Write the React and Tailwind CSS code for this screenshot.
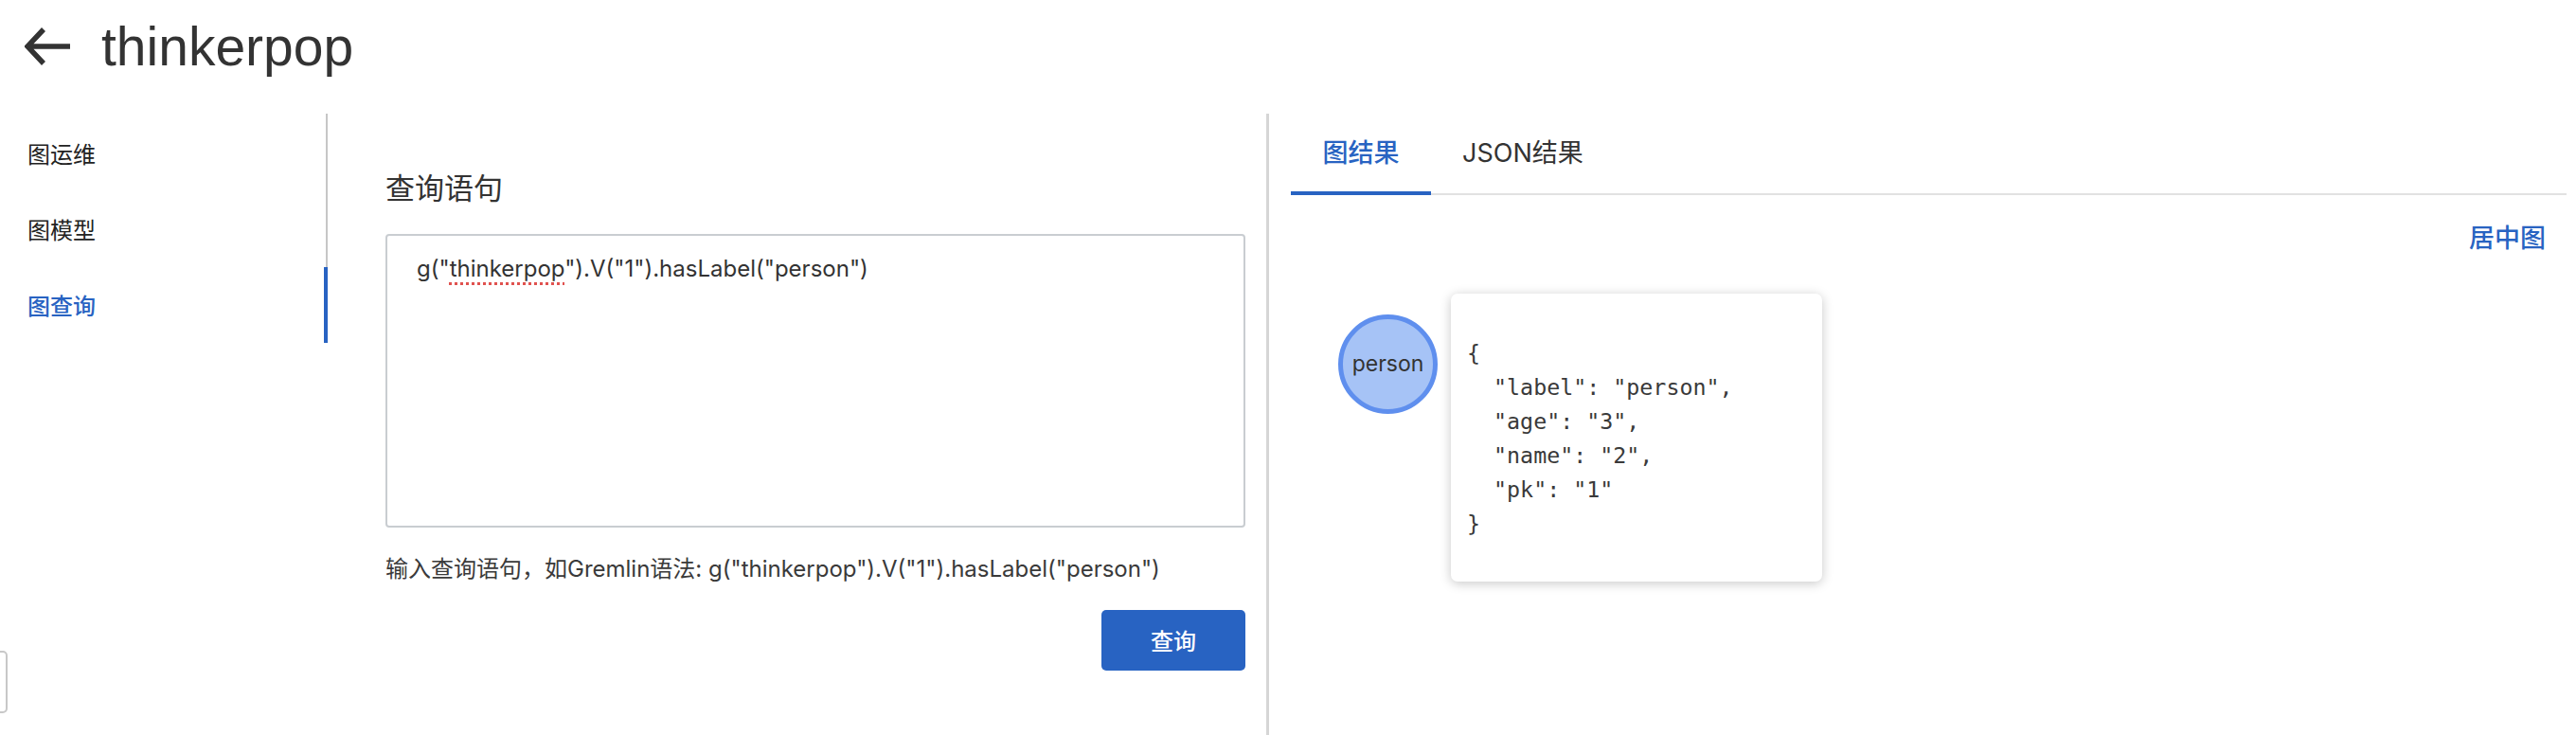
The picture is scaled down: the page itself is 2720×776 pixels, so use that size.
import React, { useState } from "react";

const MENU = ["图运维", "图模型", "图查询"];
const TABS = [
  { key: "graph", label: "图结果", w: "w-[148px]" },
  { key: "json", label: "JSON结果", w: "px-[33px]" },
];

const VERTEX = {
  label: "person",
  age: "3",
  name: "2",
  pk: "1",
};

const sans = { fontFamily: '"Inter", "Noto Sans CJK SC", sans-serif' };
const cjk = { fontFamily: '"Noto Sans CJK SC", "Inter", sans-serif' };

function BackArrow() {
  return (
    <svg width="50" height="42" viewBox="0 0 50 42" fill="none">
      <path
        d="M48 21H4M20 3L3 21l17 18"
        stroke="#333"
        strokeWidth="5.5"
        strokeLinecap="butt"
        strokeLinejoin="miter"
      />
    </svg>
  );
}

export default function App() {
  const [menu, setMenu] = useState("图查询");
  const [tab, setTab] = useState("graph");

  return (
    <div className="relative w-full h-[776px] bg-white overflow-hidden text-[#333]" style={sans}>
      {/* 헤더 */}
      <div className="h-[98px] flex items-center pl-[26px] gap-[31px]">
        <button aria-label="back" className="flex items-center">
          <BackArrow />
        </button>
        <h1
          className="text-[57px] leading-[57px] text-[#333]"
          style={{ fontFamily: '"Liberation Sans", Arial, sans-serif' }}
        >
          thinkerpop
        </h1>
      </div>

      <div className="mt-[22px] flex h-[656px]">
        {/* 왼쪽 메뉴 */}
        <div className="w-[346px] shrink-0">
          <div className="border-r-2 border-[#c6c6c6] pt-[2px]">
            {MENU.map((m) => (
              <div
                key={m}
                onClick={() => setMenu(m)}
                className={
                  "relative h-[80px] flex items-center pl-[29px] text-[24px] cursor-pointer " +
                  (m === menu ? "text-[#2863c2] font-medium" : "text-[#222]")
                }
                style={cjk}
              >
                {m}
                {m === menu && (
                  <span className="absolute right-[-2px] top-0 bottom-0 w-[4px] bg-[#2863c2]" />
                )}
              </div>
            ))}
          </div>
        </div>

        {/* 쿼리 입력 */}
        <div className="w-[991px] shrink-0 pl-[61px] pr-[22px] pt-[54px]">
          <h2 className="text-[31px] leading-[46px] text-[#333]" style={cjk}>
            查询语句
          </h2>
          <div className="mt-[27px] h-[310px] border-2 border-[#c9cdd1] rounded-[4px] pl-[31px] pt-[17px] text-[24px] leading-[36px] text-[#333]">
            g("
            <span className="underline decoration-dotted decoration-[#e0524f] decoration-[3px] underline-offset-[6px]">
              thinkerpop
            </span>
            ").V("1").hasLabel("person")
          </div>
          <p className="mt-[26px] text-[24px] leading-[36px] text-[#3a3a3a]">
            输入查询语句，如Gremlin语法: g("thinkerpop").V("1").hasLabel("person")
          </p>
          <div className="mt-[25px] flex justify-end">
            <button
              className="w-[152px] h-[64px] rounded-[5px] bg-[#2863c2] text-white text-[24px] font-medium"
              style={cjk}
            >
              查询
            </button>
          </div>
        </div>

        <div className="w-[3px] shrink-0 bg-[#d6d6d6]" />

        {/* 결과 */}
        <div className="flex-1 flex flex-col pl-[23px] pr-[10px]">
          <div className="h-[86px] flex border-b-2 border-[#e2e2e2]">
            {TABS.map((t) => (
              <button
                key={t.key}
                onClick={() => setTab(t.key)}
                className={
                  "relative h-full flex items-center justify-center text-[27px] " +
                  t.w +
                  (tab === t.key ? " text-[#2863c2] font-medium" : " text-[#333]")
                }
                style={sans}
              >
                {t.label}
                {tab === t.key && (
                  <span className="absolute left-0 right-0 bottom-[-2px] h-[4px] bg-[#2863c2]" />
                )}
              </button>
            ))}
          </div>

          <div className="mt-[24px] flex justify-end pr-[22px]">
            <button className="text-[27px] leading-[40px] font-medium text-[#2863c2]" style={cjk}>
              居中图
            </button>
          </div>

          {/* 그래프 캔버스 */}
          <div className="relative flex-1">
            <div className="absolute left-[50px] top-[62px] w-[105px] h-[105px] rounded-full bg-[#a6c3f6] border-[5px] border-[#5f8fee] flex items-center justify-center text-[23px] text-[#333]">
              person
            </div>
            <div className="absolute left-[169px] top-[40px] w-[392px] h-[304px] bg-white rounded-[7px] shadow-[0_2px_12px_rgba(0,0,0,0.22)] pl-[17px] pt-[45px]">
              <pre
                className="text-[23.3px] leading-[36px] text-[#3a3a3a]"
                style={{ fontFamily: '"DejaVu Sans Mono", monospace' }}
              >
                {JSON.stringify(VERTEX, null, 2)}
              </pre>
            </div>
          </div>
        </div>
      </div>

      {/* 왼쪽 아래 떠 있는 버튼 */}
      <div className="absolute left-[-20px] top-[687px] w-[28px] h-[66px] border-2 border-[#c8c8c8] rounded-[5px] bg-white" />
    </div>
  );
}
